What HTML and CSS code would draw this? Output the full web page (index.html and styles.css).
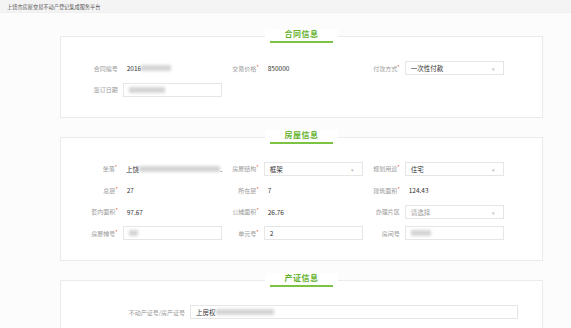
FILE: index.html
```html
<!DOCTYPE html>
<html lang="zh-CN">
<head>
    <meta charset="UTF-8">
    <title>上饶市房屋交易不动产登记集成服务平台</title>
    <link rel="stylesheet" href="styles.css">
</head>
<body>
    <!-- Header -->
    <header class="header">上饶市房屋交易不动产登记集成服务平台</header>

    <!-- 合同信息 -->
    <section class="panel">
        <div class="panel-title"><span>合同信息</span></div>
        <div class="form-grid">
            <div class="field">
                <label class="label">合同编号</label>
                <div class="value">2016<span class="blur" style="width: 30px"></span></div>
            </div>
            <div class="field">
                <label class="label">交易价格<i>*</i></label>
                <div class="value">850000</div>
            </div>
            <div class="field">
                <label class="label">付款方式<i>*</i></label>
                <div class="input select">一次性付款</div>
            </div>
            <div class="field">
                <label class="label">签订日期</label>
                <div class="input"><span class="blur" style="width: 36px"></span></div>
            </div>
        </div>
    </section>

    <!-- 房屋信息 -->
    <section class="panel">
        <div class="panel-title"><span>房屋信息</span></div>
        <div class="form-grid">
            <div class="field">
                <label class="label">坐落<i>*</i></label>
                <div class="value">上饶<span class="blur" style="width: 82px"></span>.</div>
            </div>
            <div class="field">
                <label class="label">房屋结构<i>*</i></label>
                <div class="input select">框架</div>
            </div>
            <div class="field">
                <label class="label">规划用途<i>*</i></label>
                <div class="input select">住宅</div>
            </div>

            <div class="field">
                <label class="label">总层<i>*</i></label>
                <div class="value">27</div>
            </div>
            <div class="field">
                <label class="label">所在层<i>*</i></label>
                <div class="value">7</div>
            </div>
            <div class="field">
                <label class="label">建筑面积<i>*</i></label>
                <div class="value">124.43</div>
            </div>

            <div class="field">
                <label class="label">套内面积<i>*</i></label>
                <div class="value">97.67</div>
            </div>
            <div class="field">
                <label class="label">公摊面积<i>*</i></label>
                <div class="value">26.76</div>
            </div>
            <div class="field">
                <label class="label">办理片区</label>
                <div class="input select placeholder">请选择</div>
            </div>

            <div class="field">
                <label class="label">房屋幢号<i>*</i></label>
                <div class="input"><span class="blur" style="width: 9px"></span></div>
            </div>
            <div class="field">
                <label class="label">单元号<i>*</i></label>
                <div class="input">2</div>
            </div>
            <div class="field">
                <label class="label">房间号</label>
                <div class="input"><span class="blur" style="width: 20px"></span></div>
            </div>
        </div>
    </section>

    <!-- 产证信息 -->
    <section class="panel">
        <div class="panel-title"><span>产证信息</span></div>
        <div class="form-row">
            <label class="label label-wide">不动产证号/房产证号</label>
            <div class="input input-wide">上房权<span class="blur" style="width: 58px"></span></div>
        </div>
    </section>
</body>
</html>
```

FILE: styles.css
```css
/* Reset */
* {
    margin: 0;
    padding: 0;
    box-sizing: border-box;
}

body {
    font-family: "Noto Sans CJK SC", "Noto Sans", sans-serif;
    background-color: #fcfcfc;
    color: #333;
    width: 571px;
}

/* Header */
.header {
    height: 13px;
    line-height: 13px;
    padding-left: 7px;
    font-size: 5.2px;
    color: #555;
    background-color: #f4f4f4;
    border-bottom: 1px solid #efefef;
    margin-bottom: 23px;
}

/* Panels */
.panel {
    width: 483px;
    margin: 0 0 19px 60px;
    padding-bottom: 20px;
    border: 1px solid #ebebeb;
    background-color: #fff;
}

.panel-title {
    width: 73px;
    margin: -8px auto 0;
    background-color: #fff;
    display: flex;
    justify-content: center;
}

.panel-title span {
    width: 63px;
    text-align: center;
    font-size: 8px;
    line-height: 10px;
    font-weight: bold;
    letter-spacing: 0.5px;
    color: #66b22c;
    padding-bottom: 2px;
    border-bottom: 2px solid #7cc243;
}

/* Form grid */
.form-grid {
    display: grid;
    grid-template-columns: repeat(3, 141px);
    row-gap: 7.5px;
    padding-left: 20px;
    margin-top: 18px;
}

.field,
.form-row {
    display: flex;
    align-items: center;
    height: 14px;
}

.form-row {
    padding-left: 20px;
    margin-top: 18px;
}

.label {
    width: 37px;
    margin-right: 5px;
    text-align: right;
    white-space: nowrap;
    font-size: 6px;
    color: #9a9a9a;
}

.label i {
    font-style: normal;
    color: #f0502c;
    font-size: 5px;
    vertical-align: top;
    position: relative;
    top: -1px;
}

.label-wide {
    width: 104px;
}

.value {
    width: 100px;
    padding-left: 4px;
    font-size: 6.5px;
    color: #333;
    display: flex;
    align-items: center;
    white-space: nowrap;
}

.input {
    width: 100px;
    height: 14px;
    padding: 0 5px;
    border: 1px solid #e6e6e6;
    background-color: #fff;
    font-size: 6.5px;
    color: #333;
    display: flex;
    align-items: center;
    white-space: nowrap;
    position: relative;
}

.input-wide {
    width: 328px;
}

.select::after {
    content: "▾";
    position: absolute;
    right: 8px;
    top: 3px;
    font-size: 5px;
    color: #bbb;
}

.placeholder {
    color: #999;
}

/* Masked content */
.blur {
    display: inline-block;
    height: 6px;
    background-color: #d4d4d4;
    filter: blur(1.5px);
}
```
